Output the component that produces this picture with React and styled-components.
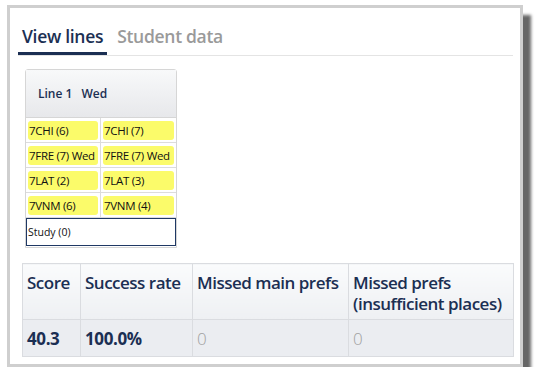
import React from 'react';
import styled, { createGlobalStyle } from 'styled-components';

const GlobalStyle = createGlobalStyle`
  html, body {
    margin: 0;
    padding: 0;
    background: #fff;
    font-family: 'Open Sans', 'Noto Sans', sans-serif;
  }
`;

const Frame = styled.div`
  box-sizing: border-box;
  margin: 5px 0 0 7px;
  width: 516px;
  height: 362px;
  border: 3px solid #cfcfcf;
  background: #fff;
  box-shadow: 8px 10px 3px rgba(0, 0, 0, 0.6);
  padding: 12px 7px 0 8px;
`;

const TabBar = styled.div`
  display: flex;
  border-bottom: 1px solid #e4e4e4;
  height: 35px;
`;

const Tab = styled.div`
  font-size: 17.5px;
  font-weight: 600;
  letter-spacing: -0.3px;
  padding: 0 4px;
  margin-right: 6px;
  color: ${(p) => (p.active ? '#1b2f53' : '#9a9a9a')};
  border-bottom: 3px solid ${(p) => (p.active ? '#1b2f53' : 'transparent')};
  line-height: 32px;
  height: 32px;
`;

const Card = styled.div`
  margin: 13px 0 0 7px;
  width: 150px;
  border: 1px solid #d6d6d6;
  border-radius: 3px 3px 0 0;
`;

const CardHeader = styled.div`
  height: 47px;
  display: flex;
  align-items: center;
  gap: 9px;
  padding-left: 12px;
  font-size: 12px;
  font-weight: 600;
  color: #1b2f53;
  background: linear-gradient(#f8f9fa, #e7e8eb);
  border-bottom: 1px solid #d6d6d6;
`;

const Grid = styled.div`
  display: grid;
  grid-template-columns: 1fr 1fr;
`;

const Cell = styled.div`
  height: 25px;
  box-sizing: border-box;
  padding: 3px 2px 3px 2px;
  border-bottom: 1px solid #dcdcdc;
  border-right: ${(p) => (p.left ? '1px solid #dcdcdc' : 'none')};
`;

const Pill = styled.div`
  height: 19px;
  background: #fbfb6a;
  border-radius: 3px;
  font-size: 11.5px;
  line-height: 19px;
  padding-left: 1px;
  color: #111;
  white-space: nowrap;
  letter-spacing: -0.3px;
`;

const Study = styled.div`
  height: 28px;
  box-sizing: border-box;
  border: 1px solid #1f3864;
  font-size: 10.5px;
  line-height: 26px;
  padding-left: 1px;
  color: #111;
  margin-bottom: 1px;
`;

const Table = styled.table`
  margin: 15px 0 0 4px;
  border-collapse: collapse;
  table-layout: fixed;
  width: 492px;
  color: #1b2f53;
`;

const Th = styled.th`
  text-align: left;
  vertical-align: top;
  white-space: nowrap;
  font-size: 17px;
  font-weight: 600;
  letter-spacing: -0.5px;
  line-height: 21px;
  height: 56px;
  box-sizing: border-box;
  padding: 8px 2px 0 4px;
  width: ${(p) => (p.w ? `${p.w}px` : 'auto')};
  border: 1px solid #dadce0;
  background: linear-gradient(#fafbfc, #eef0f3);
`;

const Td = styled.td`
  font-size: 17px;
  font-weight: ${(p) => (p.muted ? 300 : 700)};
  color: ${(p) => (p.muted ? '#a0a0a0' : '#1b2f53')};
  height: 37px;
  box-sizing: border-box;
  padding: 0 2px 0 4px;
  letter-spacing: -0.4px;
  white-space: nowrap;
  border: 1px solid #dadce0;
  border-top: none;
  background: #ebedf1;
`;

const rows = [
  ['7CHI (6)', '7CHI (7)'],
  ['7FRE (7) Wed', '7FRE (7) Wed'],
  ['7LAT (2)', '7LAT (3)'],
  ['7VNM (6)', '7VNM (4)'],
];

export default function App() {
  return (
    <>
      <GlobalStyle />
      <Frame>
        <TabBar>
          <Tab active>View lines</Tab>
          <Tab>Student data</Tab>
        </TabBar>
        <Card>
          <CardHeader>
            <span>Line 1</span>
            <span>Wed</span>
          </CardHeader>
          <Grid>
            {rows.map((r, i) => (
              <React.Fragment key={i}>
                <Cell left>
                  <Pill>{r[0]}</Pill>
                </Cell>
                <Cell>
                  <Pill>{r[1]}</Pill>
                </Cell>
              </React.Fragment>
            ))}
          </Grid>
          <Study>Study (0)</Study>
        </Card>
        <Table>
          <thead>
            <tr>
              <Th w={58}>Score</Th>
              <Th w={112}>Success rate</Th>
              <Th w={156}>Missed main prefs</Th>
              <Th>
                Missed prefs
                <br />
                (insufficient places)
              </Th>
            </tr>
          </thead>
          <tbody>
            <tr>
              <Td>40.3</Td>
              <Td>100.0%</Td>
              <Td muted>0</Td>
              <Td muted>0</Td>
            </tr>
          </tbody>
        </Table>
      </Frame>
    </>
  );
}
